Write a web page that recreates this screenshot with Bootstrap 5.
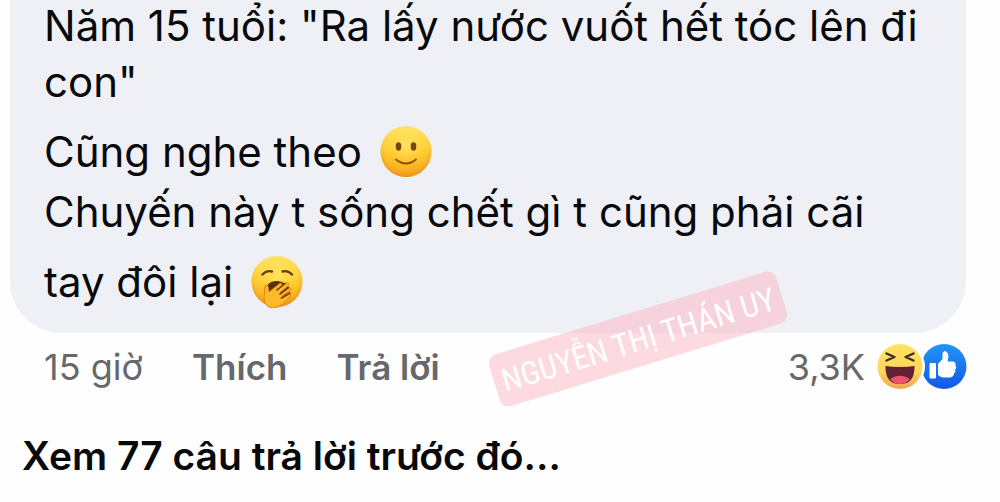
<!DOCTYPE html>
<html lang="vi">
<head>
<meta charset="utf-8">
<meta name="viewport" content="width=device-width, initial-scale=1">
<title>Bình luận</title>
<link href="https://cdn.jsdelivr.net/npm/bootstrap@5.3.0/dist/css/bootstrap.min.css" rel="stylesheet">
<style>
body { font-family: Inter, "Noto Sans", sans-serif; background: #fefefe; color: #08090b; }
.bubble { margin: -2px 34px 0 10px; padding: 0 34px 23px; background: #eff0f5; border-radius: 0 0 52px 52px; font-size: 42px; line-height: 56px; }
.emoji-line { margin-top: 14px; gap: 18px; }
.emoji { width: 52px; height: 52px; flex: none; }
.meta { margin: 0 33px 0 44px; padding-top: 8px; font-size: 36px; line-height: 52px; color: #67686b; }
.meta .actions { gap: 49px; }
.plain { border: 0; padding: 0; background: none; color: inherit; font-size: 35px; font-weight: 600; }
.reaction { width: 46px; height: 46px; }
.reaction + .reaction { margin-left: -2px; }
.more { margin: 38px 22px 0; font-size: 39px; line-height: 50px; }
.more a { color: #08090b; font-weight: 600; text-decoration: none; }
.stamp { left: 50%; top: 314px; width: 300px; height: 54px; margin-left: -12px; transform: rotate(-17deg); border-radius: 9px; background: rgba(252, 186, 199, .55); color: #fff; font: 400 32px/57px "Roboto Condensed", "Liberation Sans Narrow", sans-serif; white-space: nowrap; }
</style>
</head>
<body>
<main class="position-relative">
  <article>
    <div class="bubble">
      <p class="m-0">Năm 15 tuổi: "Ra lấy nước vuốt hết tóc lên đi con"</p>
      <p class="emoji-line d-flex align-items-center mb-1">Cũng nghe theo
        <svg class="emoji" viewBox="0 0 52 52" role="img" aria-label="Mặt cười">
          <defs>
            <linearGradient id="face" x1="0" y1="0" x2="0" y2="1"><stop offset="0" stop-color="#ffe56b"/><stop offset=".5" stop-color="#ffcb30"/><stop offset="1" stop-color="#f99a12"/></linearGradient>
            <radialGradient id="glow" cx=".5" cy=".4" r=".6"><stop offset="0" stop-color="#fff27a" stop-opacity=".6"/><stop offset=".65" stop-color="#ffd83c" stop-opacity=".15"/><stop offset="1" stop-color="#e58a1c" stop-opacity=".75"/></radialGradient>
          </defs>
          <circle cx="26" cy="25.5" r="25.5" fill="url(#face)"/><circle cx="26" cy="25.5" r="25.5" fill="url(#glow)"/>
          <ellipse cx="18.5" cy="20.5" rx="2.8" ry="4.2" fill="#744710"/><ellipse cx="33.5" cy="20.500" rx="2.8" ry="4.2" fill="#744710"/>
          <path d="M16 33.500Q26 41.500 36 33.500" fill="none" stroke="#80500d" stroke-width="1.8" stroke-linecap="round"/>
        </svg>
      </p>
      <p class="m-0">Chuyến này t sống chết gì t cũng phải cãi</p>
      <p class="emoji-line d-flex align-items-center mb-0">tay đôi lại
        <svg class="emoji" viewBox="0 0 52 52" role="img" aria-label="Mặt ngáp">
          <circle cx="26" cy="25.5" r="25.5" fill="url(#face)"/><circle cx="26" cy="25.5" r="25.5" fill="url(#glow)"/>
          <path d="M11.500 18.500Q15.500 14 21 15.500M31.500 15.500Q37 14 41 18.500" fill="none" stroke="#62400f" stroke-width="2.4" stroke-linecap="round"/>
          <path d="M15 36Q15 25 26 25Q36 25 38 35L32 43H17Z" fill="#57300c"/>
          <path d="M18 51Q13 48 13 42L14 30Q15 27 17 30L18 36L28 28Q31 26 31 29L25 35L35 27Q39 26 37 30L29 37L37 32Q41 31 39 35L31 40L38 38Q41 38 38 42Q32 49 27 51Q22 53 18 51Z" fill="#fdb929" stroke="#df8310" stroke-width="1"/>
          <path d="M26 34L34 27.500M29 38L37.500 31.500M30.500 42L39 37" fill="none" stroke="#714008" stroke-width="1.6" stroke-linecap="round"/>
        </svg>
      </p>
    </div>
    <div class="meta d-flex justify-content-between align-items-center">
      <div class="actions d-flex align-items-center">
        <time>15 giờ</time>
        <button type="button" class="plain">Thích</button>
        <button type="button" class="plain">Trả lời</button>
      </div>
      <div class="d-flex align-items-center">
        <span class="me-2 pe-1">3,3K</span>
        <svg class="reaction position-relative z-1" viewBox="0 0 46 46" role="img" aria-label="Haha">
          <defs><linearGradient id="haha" x1="0" y1="0" x2="0" y2="1"><stop offset="0" stop-color="#ffe263"/><stop offset=".6" stop-color="#ffd65a"/><stop offset="1" stop-color="#f5a451"/></linearGradient></defs>
          <circle cx="23" cy="22.5" r="22.5" fill="url(#haha)"/>
          <path d="M9.500 9.500L17.500 13L9.500 16.500M36.500 9.500L28.500 13L36.500 16.500" fill="none" stroke="#353029" stroke-width="2.4" stroke-linecap="round" stroke-linejoin="round"/>
          <path d="M8.500 22Q23 24 37.500 22Q38 40 23 40Q8 40 8.500 22Z" fill="#602234"/>
          <path d="M13 35Q23 28.500 33 35Q29 40 23 40Q17 40 13 35Z" fill="#ef526c"/>
        </svg>
        <svg class="reaction" viewBox="0 0 46 46" role="img" aria-label="Thích">
          <defs><linearGradient id="like" x1="0" y1="0" x2="0" y2="1"><stop offset="0" stop-color="#2196f5"/><stop offset="1" stop-color="#1158e6"/></linearGradient></defs>
          <circle cx="23" cy="22.5" r="22.5" fill="url(#like)"/><circle cx="-21" cy="22.5" r="25" fill="#fefefe"/>
          <path d="M9 19.500H14.500V34H9ZM17.500 20L22 15V9.500Q22.500 7.500 24.500 7.500Q27 8.500 27 12.500L26 18H32.500Q35 19 34 21.500Q35.500 23.500 33.800 25.500Q34.500 28 32.500 29.500Q32.500 32.500 29.500 33H22Q19 32.500 17.500 31Z" fill="#fff" stroke="#fff" stroke-linejoin="round"/>
        </svg>
      </div>
    </div>
  </article>
  <p class="more mb-0"><a href="#">Xem 77 câu trả lời trước đó...</a></p>
  <div class="stamp position-absolute text-center">NGUYỄN THỊ THÁN UY</div>
</main>
<script src="https://cdn.jsdelivr.net/npm/bootstrap@5.3.0/dist/js/bootstrap.bundle.min.js"></script>
</body>
</html>
